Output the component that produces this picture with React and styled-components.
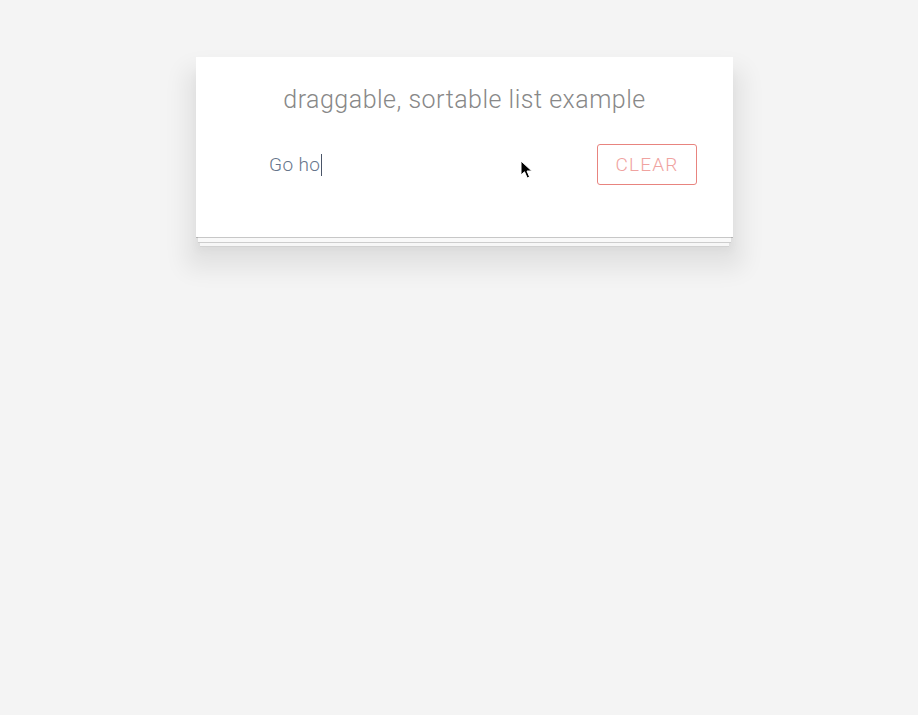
import React from "react";
import styled, { createGlobalStyle } from "styled-components";

const Global = createGlobalStyle`
    html, body {
        margin: 0;
        padding: 0;
        background: #f4f4f4;
        font-family: Roboto, "Liberation Sans", sans-serif;
    }
`;

const App = () => {
    return (
        <Page>
            <Global />
            <Card>
                <Title>draggable, sortable list example</Title>
                <Row>
                    <TodoInput>
                        Go ho<Caret />
                    </TodoInput>
                    <ClearButton>CLEAR</ClearButton>
                </Row>
                <Pointer width="14" height="20" viewBox="0 0 14 20">
                    <path
                        d="M1 1 L1 15 L4.5 11.8 L7.2 18 L9.6 17 L7 11 L11.8 11 Z"
                        fill="#000"
                        stroke="#fff"
                        strokeWidth="1"
                        strokeLinejoin="round"
                    />
                </Pointer>
            </Card>
        </Page>
    );
};

const Page = styled.div`
    min-height: 715px;
    padding: 57px 0 0 196px;
    box-sizing: border-box;
`;

const Card = styled.div`
    position: relative;
    width: 537px;
    height: 180px;
    box-sizing: border-box;
    background: #fff;
    padding: 28px 36px 0 73px;
    box-shadow:
        0 1px 0 rgba(0, 0, 0, 0.2),
        0 7px 0 -2px #f9f9f9,
        0 8px 0 -2px #cdcdcd,
        0 13px 0 -4px #f7f7f7,
        0 14px 0 -4px #d2d2d2,
        0 14px 8px rgba(0, 0, 0, 0.03),
        0 22px 22px 10px rgba(0, 0, 0, 0.075);
`;

const Title = styled.h1`
    margin: 0 0 0 -37px;
    text-align: center;
    font-size: 25px;
    font-weight: 300;
    color: #888;
    line-height: 30px;
    letter-spacing: 0.5px;
`;

const Row = styled.div`
    display: flex;
    align-items: center;
    justify-content: space-between;
    margin-top: 29px;
`;

const TodoInput = styled.div`
    display: flex;
    align-items: center;
    font-size: 19px;
    font-weight: 300;
    letter-spacing: 0.4px;
    color: #66758b;
    height: 24px;
`;

const Caret = styled.span`
    display: inline-block;
    width: 1px;
    height: 22px;
    margin-left: 1px;
    background: #4a5568;
`;

const ClearButton = styled.button`
    width: 100px;
    height: 41px;
    border: 1px solid #e8847f;
    border-radius: 3px;
    background: #fff;
    color: #f0a3a0;
    font-family: Roboto, "Liberation Sans", sans-serif;
    font-size: 19px;
    font-weight: 300;
    letter-spacing: 1.2px;
    padding: 0;
`;

const Pointer = styled.svg`
    position: absolute;
    left: 324px;
    top: 103px;
`;

export default App;
